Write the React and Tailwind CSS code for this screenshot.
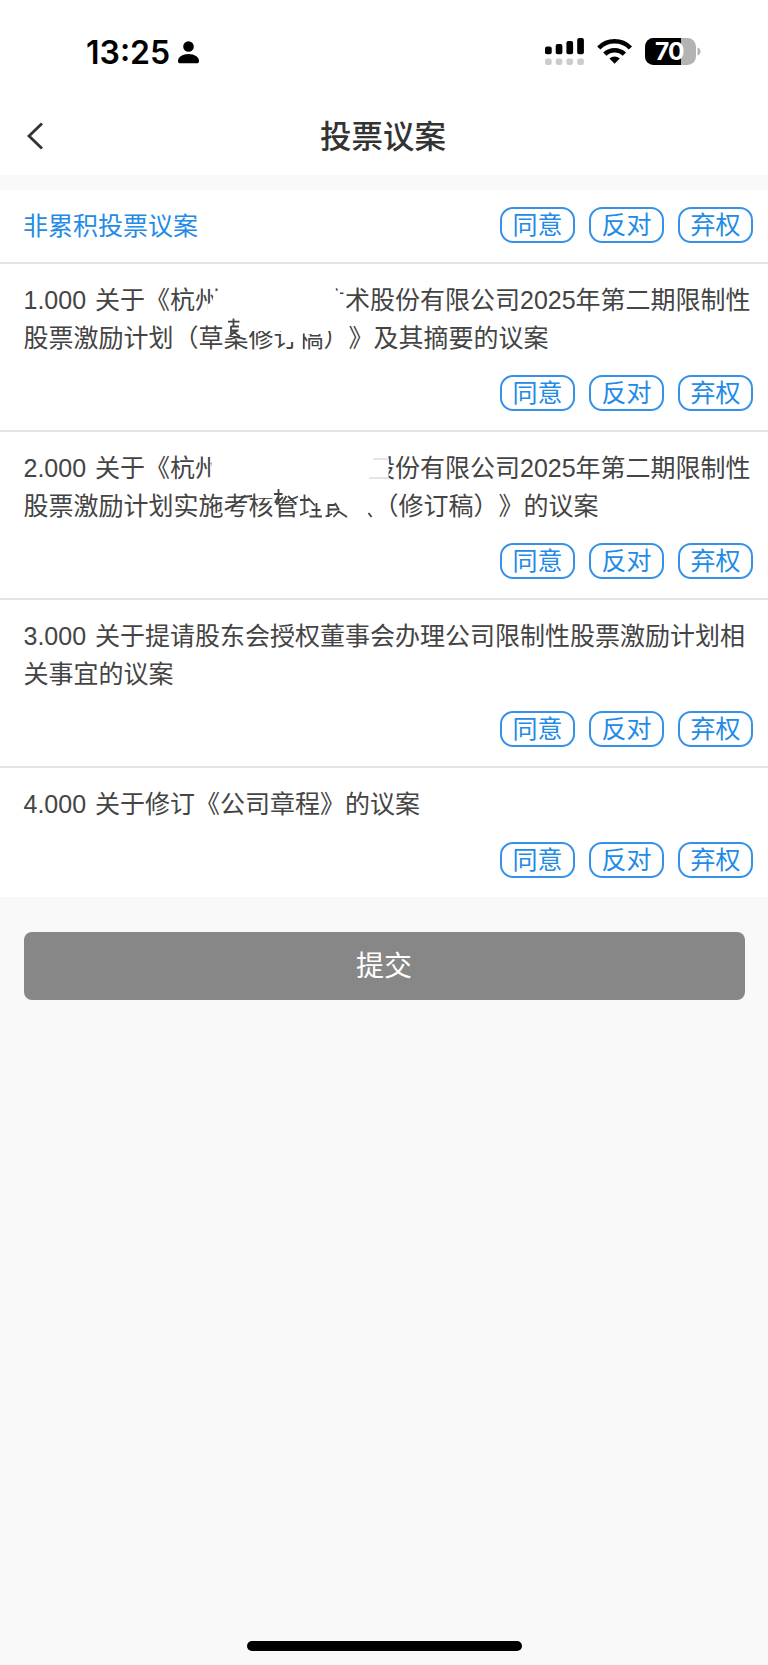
import { useState } from "react";

const OPTIONS = ["同意", "反对", "弃权"];

const proposals = [
    {
        id: 1,
        lines: ["1.000 关于《杭州　　　　　术股份有限公司2025年第二期限制性", "股票激励计划（草案修订稿）》及其摘要的议案"],
        smudge: FirstSmudge,
    },
    {
        id: 2,
        lines: ["2.000 关于《杭州　　　　　　股份有限公司2025年第二期限制性", "股票激励计划实施考核管　　　（修订稿）》的议案"],
        smudge: SecondSmudge,
    },
    { id: 3, lines: ["3.000 关于提请股东会授权董事会办理公司限制性股票激励计划相", "关事宜的议案"] },
    { id: 4, lines: ["4.000 关于修订《公司章程》的议案"] },
];

// Partly rubbed out company name, first proposal
function FirstSmudge() {
    return (
        <svg className="pointer-events-none absolute top-0 left-0" width="768" height="100" viewBox="0 264 768 100" fill="none">
            <g fill="#fff">
                <path d="M208 317V304L213 302V297L214.500 297V291H223V317Z" />
                <path d="M224.500 322H249V336H224.500Z" />
                <path d="M249 322H283V331H249Z" />
                <path d="M283 322H299V342H283Z" />
                <path d="M299 322H321V334H299Z" />
                <path d="M299 334H308V352H299Z" />
                <path d="M321 322H335V331H321Z" />
            </g>
            <g stroke="#444" strokeWidth="1.8">
                <path d="M336 288.500L337.500 290.500M340 293.200H343.500" strokeWidth="1.400" />
                <path d="M228 321.700H239.500M233.500 318.500V326M231 326.500H239M231 326V334M231 330.500H238.500M229.500 336L238 330M232.500 331.500L240 336.500" />
                <path d="M303.800 333.500V349M304.500 337L307 341" />
            </g>
        </svg>
    );
}

function SecondSmudge() {
    return (
        <svg className="pointer-events-none absolute top-0 left-0" width="768" height="100" viewBox="0 432 768 100" fill="none">
            <g fill="#fff">
                <path d="M211.500 452H223V485H211.500Z" />
                <path d="M368 452H388.500V485H368Z" />
                <path d="M258 490H274.500V498H258Z" />
                <path d="M274.500 490H299V502H274.500Z" />
            </g>
            <path d="M373 459H389M369 478H389" stroke="#ddd" strokeWidth="1.500" />
            <g stroke="#444" strokeWidth="1.800">
                <path d="M241 497L252 496" />
                <path d="M274 494H282.500M278.500 489V504M275 503L278 497M283 497L277 503M286.500 496L282 503.500M285 502.500L298 496.500M288 496L295 503" />
                <path d="M300 500H309M304.500 494.500V513M300 515L308.500 511.500M308 498L315 505.500M316.500 503V516.500M311.500 510H320.500M309.500 516.500H322" />
                <path d="M328.500 504V517M328.500 505H335M328.500 509.500H337.500M335 503L339 510M325.500 516.500L332 514M333.500 517L338.500 511.500M338 511L347 517" />
                <path d="M368.500 513L371.500 517" />
            </g>
        </svg>
    );
}

function StatusBar() {
    return (
        <div className="flex h-[104px] items-start justify-between pr-[67px] pl-[86px] text-black">
            <div className="flex items-center pt-[34px]">
                <span className="w-[84px] font-[Inter] text-[32px] leading-[38px] font-semibold whitespace-nowrap">13:25</span>
                <svg className="ml-2" width="22" height="24" viewBox="0 0.5 22 24">
                    <circle cx="10.500" cy="6" r="5.300" />
                    <path d="M0 20.500C0 16.500 4.500 13.500 10.500 13.500S21 16.500 21 20.500C21 22 20.200 22.800 19 22.800H2C.8 22.800 0 22 0 20.500Z" />
                </svg>
            </div>
            <svg className="mt-[36px]" width="156" height="32" viewBox="0 0 156 32">
                {/* signal */}
                <rect x="0" y="10.500" width="6.700" height="7.700" rx="2" />
                <rect x="10.700" y="8" width="6.700" height="10.200" rx="2" />
                <rect x="21.400" y="5" width="6.700" height="13.200" rx="2" />
                <rect x="32.200" y="2" width="6.700" height="16.200" rx="2" />
                <g fill="#ccc">
                    <rect x="0" y="22.500" width="6.700" height="6.500" rx="2.200" />
                    <rect x="10.700" y="22.500" width="6.700" height="6.500" rx="2.200" />
                    <rect x="21.400" y="22.500" width="6.700" height="6.500" rx="2.200" />
                    <rect x="32.200" y="22.500" width="6.700" height="6.500" rx="2.200" />
                </g>
                {/* wifi */}
                <g fill="none" stroke="#000" strokeWidth="4.600">
                    <path d="M53.800 12A22 22 0 0 1 85.400 12" />
                    <path d="M59.800 18.200A14 14 0 0 1 79.400 18.200" />
                </g>
                <path d="M69.600 27.700L64.400 22.500A7.600 7.600 0 0 1 74.800 22.500Z" />
                {/* battery */}
                <clipPath id="battery">
                    <rect x="100" y="2" width="51" height="27" rx="8.500" />
                </clipPath>
                <g clipPath="url(#battery)">
                    <rect x="100" y="2" width="51" height="27" fill="#b3b3b3" />
                    <rect x="100" y="2" width="36" height="27" />
                </g>
                <path d="M152.500 11.500C156.500 12.500 156.500 18.500 152.500 19.500Z" fill="#b3b3b3" />
                <text x="124.300" y="24.300" textAnchor="middle" fill="#fff" className="font-[Inter] text-[24.5px] font-bold tracking-[-1px]">70</text>
            </svg>
        </div>
    );
}

function VoteOptions({ onSelect }) {
    return (
        <div className="flex justify-end gap-[14px]">
            {OPTIONS.map((option) => (
                <button
                    key={option}
                    onClick={() => onSelect(option)}
                    className="h-9 w-[75px] rounded-[13px] border-2 border-[#3592e8] text-[25px] leading-[32px] whitespace-nowrap text-[#238be6]"
                >
                    {option}
                </button>
            ))}
        </div>
    );
}

export default function App() {
    const [votes, setVotes] = useState({});

    const voteAll = (option) => {
        const all = {};
        proposals.forEach((p) => {
            all[p.id] = option;
        });
        setVotes(all);
    };

    return (
        <div className="flex h-[1665px] w-[768px] flex-col bg-[#f9f9f9] font-['Liberation_Sans','Noto_Sans_CJK_SC',sans-serif] [text-spacing-trim:space-all]">
            <header className="h-[175px] bg-white">
                <StatusBar />
                <div className="flex h-[64px] items-center pr-[26px] pl-[26px]">
                    <button className="w-5">
                        <svg width="20" height="30" viewBox="0 0 20 30" fill="none" stroke="#333" strokeWidth="2.800">
                            <path d="M16 2.500L3 15L16 27.500" />
                        </svg>
                    </button>
                    <h1 className="flex-1 pt-1 pr-[22px] text-center text-[31.5px] font-medium text-[#333]">投票议案</h1>
                </div>
            </header>

            {/* Proposals */}
            <main className="mt-[15px] bg-white">
                <div className="flex h-[74px] items-center justify-between border-b-2 border-[#e5e5e5] pr-[15px] pb-0.5 pl-[23px]">
                    <h2 className="pt-[3px] text-[25px] text-[#238be6]">非累积投票议案</h2>
                    <VoteOptions onSelect={voteAll} />
                </div>
                {proposals.map((p) => (
                    <div key={p.id} className="relative border-b-2 border-[#e5e5e5] pt-[18px] pr-[15px] pb-[19px] pl-[23.5px] last:border-0">
                        {p.lines.map((line) => (
                            <p key={line} className="text-[25px] leading-[37.5px] [word-spacing:2px] whitespace-nowrap text-[#444]">
                                {line}
                            </p>
                        ))}
                        {p.smudge && <p.smudge />}
                        <div className="mt-[18px]">
                            <VoteOptions onSelect={(option) => setVotes({ ...votes, [p.id]: option })} />
                        </div>
                    </div>
                ))}
            </main>

            {/* Submit Button */}
            <button className="mx-[23.5px] mt-[35px] h-[68px] rounded-lg bg-[#878787] pt-0.5 text-[28px] text-white">提交</button>

            <div className="mx-auto mt-auto mb-[14px] h-[10px] w-[275px] rounded-full bg-black" />
        </div>
    );
}
